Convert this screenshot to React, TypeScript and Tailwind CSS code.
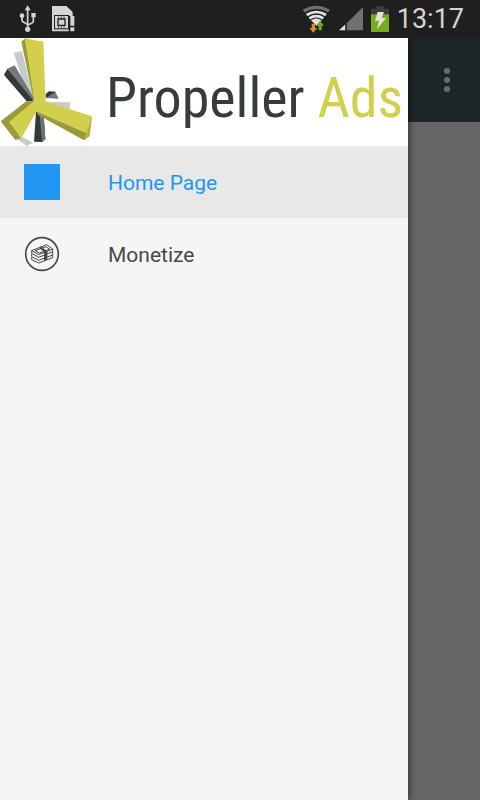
import { useState } from "react"
import clsx from "clsx"

function UsbIcon() {
  return (
    <svg viewBox="0 0 54 84" className="h-7 w-[18px]" fill="none" stroke="#d4d4d4" strokeWidth="5" aria-hidden="true">
      <path d="M29 14v58M12 36v10q0 5 6 6l11 7M46 34v14q0 5-6 7l-11 6" />
      <path d="M29 1l9 15H20z" fill="#d4d4d4" stroke="none" />
      <circle cx="12" cy="32" r="7" fill="#d4d4d4" stroke="none" />
      <path d="M40 24h13v13H40z" fill="#d4d4d4" stroke="none" />
      <circle cx="29" cy="73" r="8" fill="#d4d4d4" stroke="none" />
    </svg>
  )
}

function SimIcon() {
  return (
    <svg viewBox="0 0 72 84" className="h-7 w-6" aria-hidden="true">
      <path d="M0 3h43l19 18v12H50v46H0z" fill="#d4d4d4" />
      <path d="M6 30h45v43H6z" fill="#1f1f1f" />
      <path d="M9 33h39v37H9z" fill="#d4d4d4" />
      <path d="M18 42h21v19H18z" fill="#d4d4d4" stroke="#1f1f1f" strokeWidth="4" />
      <path d="M20 34v8M28 34v8M36 34v8M20 62v8M28 62v8M36 62v8" stroke="#1f1f1f" strokeWidth="2" />
      <path d="M55 33h12v29H55zM55 67h12v12H55z" fill="#d4d4d4" />
    </svg>
  )
}

function WifiIcon() {
  return (
    <svg viewBox="0 0 84 84" className="size-7" fill="none" aria-hidden="true">
      <path d="M2 18q38-22 76 0" stroke="#6f6f6f" strokeWidth="10" />
      <path d="M11 30q29-18 58 0M19 40q21-13 42 0" stroke="#e2e2e2" strokeWidth="8" />
      <path d="M24 46q16-11 32 0L40 62z" fill="#e2e2e2" />
      <path d="M26 56h10v13h7L31 83 19 69h7z" fill="#e08a2c" />
      <path d="M47 76V62h-8l12-15 12 15h-7v14z" fill="#77ad1b" />
    </svg>
  )
}

function SignalIcon() {
  return (
    <svg viewBox="0 0 74 74" className="size-6" aria-hidden="true">
      <path d="M74 0v72H24V50z" fill="#707070" />
      <path d="M19 54v18H0z" fill="#e2e2e2" />
    </svg>
  )
}

function BatteryIcon() {
  return (
    <svg viewBox="0 0 54 78" className="h-[26px] w-[18px]" aria-hidden="true">
      <path d="M16 0h23v8h15v17H0V8h16z" fill="#3d3d3d" />
      <path d="M0 25h54v53H0z" fill="#77ad1b" />
      <path d="M20 18h19l-7 18h13L18 70l6-26H12z" fill="#e2e2e2" />
    </svg>
  )
}

function PropellerLogo() {
  return (
    <svg viewBox="0 6 312 324" className="h-[108px] w-[104px] shrink-0" aria-hidden="true">
      <path d="M41 50l25-5 36 148-14 1z" fill="#c8cbcb" />
      <path d="M130 197l80 2v32z" fill="#c8cbcb" />
      <path d="M50 308l18-5 31 17-19 10z" fill="#c8cbcb" />
      <path d="M22 98l22-10 61 104-15 3z" fill="#72787b" />
      <path d="M22 98l-10 19 68 79h21z" fill="#33383b" />
      <path d="M137 186l9-19h20l10 21z" fill="#72787b" />
      <path d="M137 174l10-8 20 1-30 19z" fill="#33383b" />
      <path d="M108 226l23 11 5 73-10 8-24-1z" fill="#33383b" />
      <path d="M119 235l12 2 5 73-10 8z" fill="#6d7477" />
      <path d="M64 17l11-10 32 186h-6z" fill="#9a9b38" />
      <path d="M75 7l55 10 7 180-33 6z" fill="#d1cf4b" />
      <path d="M2 256l77-60h29l-76 62 31 49-17 5z" fill="#9a9b38" />
      <path d="M110 226l159 69-17 18-139-77z" fill="#9a9b38" />
      <path d="M102 195l36 2 138 44-7 54-159-69-46 80-37-48z" fill="#d1cf4b" />
      <path d="M276 241l-7 60-17 12 7-22z" fill="#b5b540" />
    </svg>
  )
}

function MoneyIcon() {
  return (
    <svg viewBox="0 0 108 108" className="size-9" fill="none" stroke="#484848" aria-hidden="true">
      <circle cx="54" cy="54" r="49" strokeWidth="5" />
      <g strokeWidth="3" strokeLinejoin="round">
        <path d="M23 44l45-18 18 13-42 17z" />
        <path d="M33 44l33-12 11 8-31 11z" />
        <path d="M23 44v8l21 12 42-17v-8M23 54v8l21 11 42-16v-9M23 64v7l21 10 42-16v-8" />
      </g>
      <path d="M48 34l18 13v8" strokeWidth="7" />
      <path d="M60 49l10-4v25l-10 4z" fill="#484848" stroke="none" />
    </svg>
  )
}

const items = [
  { label: "Home Page", icon: <span className="size-9 bg-[#2196f3]" /> },
  { label: "Monetize", icon: <MoneyIcon /> },
]

function StatusBar() {
  return (
    <header className="flex h-[38px] items-center justify-between bg-[#1f1f1f] pr-4 pl-[18px]">
      <div className="flex items-center gap-4">
        <UsbIcon />
        <SimIcon />
      </div>
      <div className="flex items-center gap-2">
        <WifiIcon />
        <SignalIcon />
        <BatteryIcon />
        <time className="text-[27px] leading-9 text-[#d4d4d4]">13:17</time>
      </div>
    </header>
  )
}

export default function App() {
  const [selected, setSelected] = useState("Home Page")

  return (
    <div className="flex min-h-screen flex-col bg-[#666] font-['Roboto',sans-serif]">
      <StatusBar />
      <div className="flex flex-1 overflow-hidden">
        <aside className="z-10 w-[85%] bg-[#f5f5f5] shadow-[0_0_8px_rgba(0,0,0,0.7)]">
          <div className="flex h-[108px] items-center bg-white">
            <PropellerLogo />
            <h1 className="pt-3 pl-0.5 font-['Roboto_Condensed','Roboto',sans-serif] text-[56px] leading-[72px] whitespace-nowrap text-[#363b3e]">
              Propeller <span className="text-[#d1cf4b]">Ads</span>
            </h1>
          </div>
          <nav>
            {items.map((item) => (
              <button
                key={item.label}
                onClick={() => setSelected(item.label)}
                className={clsx(
                  "flex h-18 w-full items-center gap-12 px-6 text-left text-[21px] leading-7",
                  selected === item.label ? "bg-[#e8e8e8] text-[#2196f3]" : "text-[#484848]"
                )}
              >
                {item.icon}
                <span className="pt-0.5">{item.label}</span>
              </button>
            ))}
          </nav>
        </aside>
        <main className="flex-1">
          <div className="flex h-[84px] items-center justify-end bg-[#1e2528] px-[19px]">
            <button aria-label="More options" className="flex w-7 flex-col items-center gap-[3px]">
              <span className="size-1.5 rounded-full bg-[#6b6b6b]" />
              <span className="size-1.5 rounded-full bg-[#6b6b6b]" />
              <span className="size-1.5 rounded-full bg-[#6b6b6b]" />
            </button>
          </div>
        </main>
      </div>
    </div>
  )
}
